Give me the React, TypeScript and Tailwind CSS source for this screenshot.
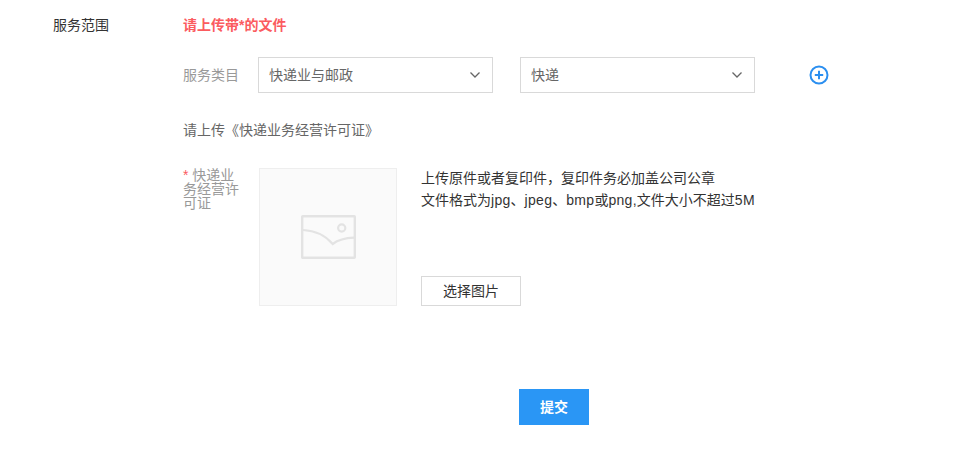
const font = "font-['Liberation_Sans','Noto_Sans_CJK_SC',sans-serif]";

function Chevron() {
  return (
    <svg width="12" height="8" viewBox="0 0 12 8" fill="none" className="shrink-0">
      <path d="M1.5 1.5 L6 6 L10.5 1.5" stroke="#666666" strokeWidth="1.3" />
    </svg>
  );
}

function Select({ value, className }: { value: string; className: string }) {
  return (
    <div className={`flex h-[36px] w-[235px] items-center justify-between border border-[#d9d9d9] bg-white pl-[10px] pr-[11px] text-[14px] text-[#666666] ${className}`}>
      <span>{value}</span>
      <Chevron />
    </div>
  );
}

function PlusCircle() {
  return (
    <svg width="20" height="20" viewBox="0 0 20 20" fill="none">
      <circle cx="10" cy="10" r="8.5" stroke="#2b8ff0" strokeWidth="2" />
      <path d="M5.8 10 H14.2 M10 5.8 V14.2" stroke="#2b8ff0" strokeWidth="2" />
    </svg>
  );
}

function ImagePlaceholder() {
  return (
    <svg width="55" height="44" viewBox="0 0 55 44" fill="none">
      <rect x="1.2" y="1.2" width="52.6" height="41.6" rx="0.5" stroke="#e3e3e3" strokeWidth="2.4" />
      <path d="M2 15 C14 15.5 24 20 31.7 29 C37 25 45 23 53 22.7" stroke="#e3e3e3" strokeWidth="2.2" />
      <circle cx="40.7" cy="13" r="3.6" stroke="#e3e3e3" strokeWidth="2.2" />
    </svg>
  );
}

export default function App() {
  const latin = "tracking-[0.3px]";
  return (
    <div className={`h-[470px] w-[980px] overflow-hidden bg-white ${font}`}>
      <div className="flex pl-[53px] pt-[16px]">
        <div className="w-[130px] text-[14px] leading-[18px] text-[#333333]">服务范围</div>

        <div className="flex flex-col">
          <div className="text-[14px] font-bold leading-[18px] text-[#fb5b5f]">请上传带*的文件</div>

          <div className="mt-[23px] flex items-center">
            <div className="w-[75px] text-[14px] text-[#999999]">服务类目</div>
            <Select value="快递业与邮政" className="" />
            <Select value="快递" className="ml-[27px]" />
            <div className="ml-[54px]">
              <PlusCircle />
            </div>
          </div>

          <div className="mt-[28px] text-[14px] leading-[18px] text-[#666666]">请上传《快递业务经营许可证》</div>

          <div className="mt-[29px] flex">
            <div className="w-[76px] pr-[18px] text-[14px] leading-[14px] text-[#999999]">
              <span className="text-[#fb5b5f]">* </span>快递业务经营许可证
            </div>
            <div className="flex h-[138px] w-[138px] items-center justify-center border border-[#eeeeee] bg-[#fafafa]">
              <ImagePlaceholder />
            </div>
            <div className="ml-[24px] flex flex-col justify-between">
              <div className="-mt-px text-[14px] leading-[22px] text-[#333333]">
                <p>上传原件或者复印件，复印件务必加盖公司公章</p>
                <p>
                  文件格式为<span className={latin}>jpg</span>、<span className={latin}>jpeg</span>、<span className={latin}>bmp</span>或<span className={latin}>png,</span>文件大小不超过<span className={latin}>5M</span>
                </p>
              </div>
              <button className="h-[30px] w-[100px] border border-[#d9d9d9] bg-white text-[14px] text-[#333333]">选择图片</button>
            </div>
          </div>
        </div>
      </div>

      <div className="mt-[83px] pl-[519px]">
        <button className="h-[36px] w-[70px] bg-[#2a96f5] text-[14px] font-bold text-white">提交</button>
      </div>
    </div>
  );
}
